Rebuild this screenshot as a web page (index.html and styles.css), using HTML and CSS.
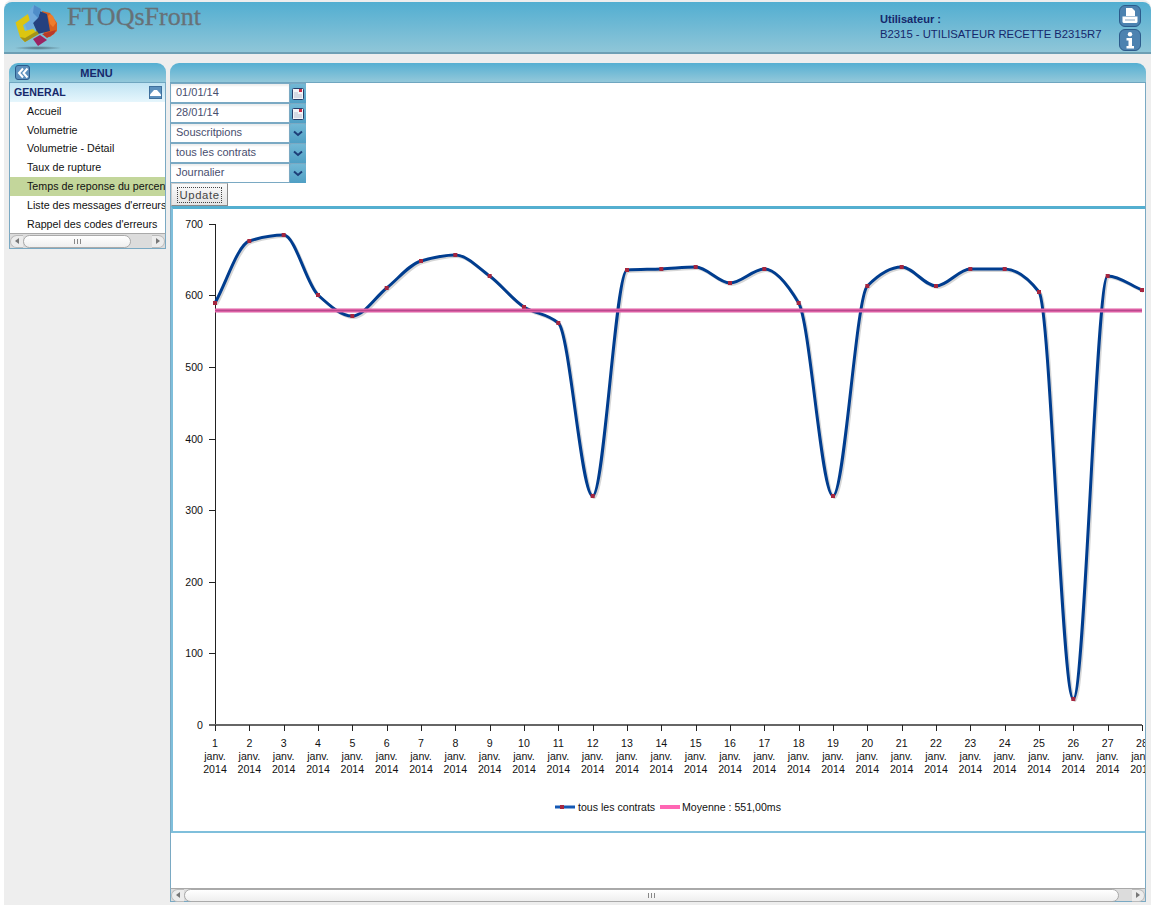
FILE: index.html
```html
<!DOCTYPE html>
<html lang="fr">
<head>
<meta charset="utf-8">
<title>FTOQsFront</title>
<link rel="stylesheet" href="styles.css">
</head>
<body>
<div class="page">
  <header class="topbar">
    <svg class="logo" width="50" height="48" viewBox="14 2 50 48">
      <defs><radialGradient id="ls"><stop offset="0" stop-color="#3c5560" stop-opacity=".75"/><stop offset="1" stop-color="#3c5560" stop-opacity="0"/></radialGradient></defs>
      <ellipse cx="38" cy="47" rx="24" ry="2" fill="url(#ls)"/>
      <polygon points="33,38 40,34 47,39 38,45" fill="#9b2463"/>
      <polygon points="42,10 50,12 57,22 57,30 50,36 44,34" fill="#d9601f"/>
      <polygon points="50,13 53,15 56,22 53,26 50,23 48,15" fill="#ef7d2c"/>
      <polygon points="42,33 56,29 54,33 47,37" fill="#b83a2a"/>
      <polygon points="37,9 47,13 50,30 38,33 33,22" fill="#25417f"/>
      <polygon points="15.500,21.500 28,13 30,20 23,24 25,30 33,28 38,33 25,41 20,36" fill="#dcc511"/>
      <polygon points="20,36 25,41 39,33 37,30 25,37" fill="#a3931a"/>
      <polygon points="28,11 34,4 41,8 38,17 33,22 34,27 27,29 25,23 30,19" fill="#6ea9dc"/>
      <polygon points="34,4 41,8 38,17 33,12" fill="#4f8dc9"/>
    </svg>
    <div class="brand">FTOQsFront</div>
    <div class="user">
      <div class="user-label">Utilisateur :</div>
      <div>B2315 - UTILISATEUR RECETTE B2315R7</div>
    </div>
    <div class="tools">
      <span class="tool">
        <svg width="18" height="18" viewBox="0 0 18 18"><path d="M5 1h6l3 3v5H5z" fill="#fff"/><path d="M1.500 9.500h15v5a1.500 1.500 0 0 1-1.500 1.500H3a1.500 1.500 0 0 1-1.500-1.500z" fill="#fff"/><rect x="4" y="12.500" width="10" height="1" fill="#8fa9c4"/></svg>
      </span>
      <span class="tool">
        <svg width="18" height="18" viewBox="0 0 18 18"><circle cx="9" cy="3.200" r="2.200" fill="#fff"/><path d="M5.500 7h5.500v8h2v2.500H5.500V15h2V9.500h-2z" fill="#fff"/></svg>
      </span>
    </div>
  </header>

  <main class="workspace">
    <aside class="sidebar">
      <div class="panel-head menu-head">
        <span class="collapse"><svg width="12" height="12" viewBox="0 0 12 12"><path d="M6 1.500 2 6l4 4.500M10.500 1.500 6.500 6l4 4.500" fill="none" stroke="#fff" stroke-width="2"/></svg></span>
        <span class="menu-title">MENU</span>
      </div>
      <div class="group-head">
        <span>GENERAL</span>
        <span class="group-toggle"><svg width="11" height="7" viewBox="0 0 11 7"><path d="M0 7V5.500L4 1h3l4 4.500V7z" fill="#fff"/></svg></span>
      </div>
      <nav class="menu">
        <a class="menu-item">Accueil</a>
        <a class="menu-item">Volumetrie</a>
        <a class="menu-item">Volumetrie - Détail</a>
        <a class="menu-item">Taux de rupture</a>
        <a class="menu-item is-active">Temps de reponse du percentile</a>
        <a class="menu-item">Liste des messages d'erreurs</a>
        <a class="menu-item">Rappel des codes d'erreurs</a>
      </nav>
      <div class="hscroll side-scroll">
        <span class="arrow left"></span>
        <span class="thumb"><span class="grip"></span></span>
        <span class="arrow right"></span>
      </div>
    </aside>

    <section class="content">
      <div class="panel-head"></div>
      <div class="content-body">
        <form class="filters">
          <div class="field"><span class="value">01/01/14</span><span class="btn"><svg width="12" height="12" viewBox="0 0 12 12"><rect x=".5" y=".5" width="11" height="11" rx="1" fill="#f2f4f8" stroke="#27406b"/><rect x="7" y="1" width="3" height="3" fill="#c8324a"/><path d="M2 5h4M2 7h8M2 9h8" stroke="#b6c0d0"/></svg></span></div>
          <div class="field"><span class="value">28/01/14</span><span class="btn"><svg width="12" height="12" viewBox="0 0 12 12"><rect x=".5" y=".5" width="11" height="11" rx="1" fill="#f2f4f8" stroke="#27406b"/><rect x="7" y="1" width="3" height="3" fill="#c8324a"/><path d="M2 5h4M2 7h8M2 9h8" stroke="#b6c0d0"/></svg></span></div>
          <div class="field"><span class="value">Souscritpions</span><span class="btn"><svg width="10" height="7" viewBox="0 0 10 7"><path d="M1 1.500 5 5l4-3.500" fill="none" stroke="#1d3f78" stroke-width="2"/></svg></span></div>
          <div class="field"><span class="value">tous les contrats</span><span class="btn"><svg width="10" height="7" viewBox="0 0 10 7"><path d="M1 1.500 5 5l4-3.500" fill="none" stroke="#1d3f78" stroke-width="2"/></svg></span></div>
          <div class="field"><span class="value">Journalier</span><span class="btn"><svg width="10" height="7" viewBox="0 0 10 7"><path d="M1 1.500 5 5l4-3.500" fill="none" stroke="#1d3f78" stroke-width="2"/></svg></span></div>
          <button class="update" type="button"><span>Update</span></button>
        </form>
        <div class="chart-box"><svg id="chart" class="chart" width="972" height="622" viewBox="173 209 972 622"></svg></div>
      </div>
      <div class="hscroll main-scroll">
        <span class="arrow left"></span>
        <span class="thumb"><span class="grip"></span></span>
        <span class="arrow right"></span>
      </div>
    </section>
  </main>
</div>
<script src="chart.js"></script>
</body>
</html>
```
FILE: styles.css
```css
* { box-sizing: border-box; }
html, body { margin: 0; height: 100%; background: #fff; }
body { font-family: "Liberation Sans", Arial, sans-serif; font-size: 10.700px; overflow: hidden; }
.page { margin: 0 5px 0 4px; height: 905px; background: #eee; display: flex; flex-direction: column; padding-top: 2px; border-radius: 8px 8px 0 0; }

.topbar { height: 52px; flex: none; display: flex; align-items: flex-start; background: linear-gradient(#52aed1, #8fc6d8); border-bottom: 2px solid #6d9fb4; border-radius: 8px 8px 0 0; }
.logo { flex: none; margin: 1px 0 0 10px; }
.brand { font-family: "Liberation Serif", serif; font-size: 26px; line-height: 30px; color: #677177; -webkit-text-stroke: .3px #677177; margin-left: 3px; }
.user { margin-left: auto; margin-top: 10px; font-size: 11.300px; line-height: 14px; color: #16286b; width: 239px; }
.user-label { font-weight: bold; line-height: 15px; font-size: 11.100px; }
.tools { flex: none; width: 32px; padding-top: 3px; display: flex; flex-direction: column; gap: 2px; }
.tool { width: 22px; height: 22px; display: flex; align-items: center; justify-content: center; background: #4c82b0; border: 1px solid #2c5b8c; border-radius: 6px; }

.workspace { flex: 1; display: flex; align-items: flex-start; padding: 9px 5px 3px 5px; gap: 4px; min-height: 0; }
.panel-head { height: 20px; background: linear-gradient(#55afd2, #93c8da); border-bottom: 1px solid #6fa6c0; border-radius: 9px 9px 0 0; }

.sidebar { width: 157px; flex: none; }
.menu-head { display: flex; align-items: center; padding-left: 6px; }
.collapse { width: 15px; height: 15px; display: flex; align-items: center; justify-content: center; background: #5c90bd; border: 1px solid #2c5b8c; border-radius: 3px; }
.menu-title { flex: 1; text-align: center; font-weight: bold; font-size: 11px; color: #16286b; padding-right: 3px; }
.group-head { height: 18.800px; display: flex; align-items: center; justify-content: space-between; padding: 0 3px 0 4px; font-weight: bold; font-size: 10.600px; color: #16286b; background: linear-gradient(#bfe3f3, #e6f6fc); border-left: 1px solid #7aa9c3; border-right: 1px solid #7aa9c3; }
.group-toggle { width: 13px; height: 13px; display: flex; align-items: center; justify-content: center; background: #5c90bd; border: 1px solid #3e6f9c; }
.menu { background: #fff; border-left: 1px solid #7aa9c3; border-right: 1px solid #7aa9c3; }
.menu-item { display: block; height: 18.800px; line-height: 18.800px; padding-left: 17px; color: #111; white-space: nowrap; overflow: hidden; }
.is-active { background: #c3d69b; }

.hscroll { display: flex; align-items: center; background: #dcdcdc; border: 1px solid #7aa9c3; border-top: 1px solid #a9a9a9; }
.arrow { flex: none; width: 13px; height: 13px; display: flex; align-items: center; justify-content: center; background: #ececec; border: 1px solid #bbb; }
.arrow.left { border-radius: 7px 0 0 7px; border-right: 0; }
.arrow.right { border-radius: 0 7px 7px 0; border-left: 0; }
.arrow::before { content: ""; border-style: solid; border-width: 3px 0 3px 4px; border-color: transparent transparent transparent #777; }
.arrow.left::before { border-width: 3px 4px 3px 0; border-color: transparent #777 transparent transparent; }
.thumb { height: 13px; display: flex; align-items: center; justify-content: center; background: linear-gradient(#fff, #efefef); border: 1px solid #aaa; border-radius: 7px; }
.grip { width: 7px; height: 5px; background: repeating-linear-gradient(90deg, #888 0 1px, transparent 1px 3px); }
.side-scroll { height: 16px; }
.side-scroll .thumb { width: 108px; }
.side-scroll .arrow.right { margin-left: auto; }
.main-scroll { flex: none; height: 14px; }
.main-scroll .thumb { width: 935px; }
.main-scroll .arrow.right { margin-left: auto; }

.content { width: 976px; flex: none; height: 839px; display: flex; flex-direction: column; }
.content-body { flex: 1; background: #fff; border-left: 1px solid #7aa9c3; border-right: 1px solid #7aa9c3; min-height: 0; }
.filters { display: block; }
.field { width: 135px; height: 20px; display: flex; background: #7aa9c3; padding-top: 1px; }
.value { width: 118px; height: 18px; line-height: 17px; padding-left: 5px; font-size: 11px; background: #fff; color: #484e6e; box-shadow: inset 0 2px 2px #eee; }
.btn { width: 16px; margin-left: 1px; height: 19px; display: flex; align-items: center; justify-content: center; background: linear-gradient(#72b8d5, #4f9fc4); border-radius: 2px 2px 0 0; }
.update { display: block; width: 57px; height: 23px; padding: 0; font: 11.300px "Liberation Sans", Arial, sans-serif; letter-spacing: .6px; color: #444; background: linear-gradient(#fafafa, #e4e4e4); border: 1px solid #ccc; border-right-color: #888; border-bottom-color: #888; }
.update span { border: 1px dotted #444; padding: 1px 1px; }
.chart-box { height: 627px; background: #fff; border-top: 3px solid #54afd0; border-left: 2px solid #7fbfdb; border-bottom: 2px solid #7fbfdb; overflow: hidden; }
.chart { display: block; }
.chart text { font-family: "Liberation Sans", Arial, sans-serif; font-size: 10.600px; fill: #111; }
.axis-line { stroke: #222; stroke-width: 1; fill: none; }
.axis-base { stroke: #666; stroke-width: 2; }
.series-shadow { fill: none; stroke: #bbb; stroke-width: 3; opacity: .6; }
.series { fill: none; stroke: #003d8f; stroke-width: 3; }
.point { fill: #a5263f; }
.avg-line { stroke: #dd5fa4; stroke-width: 4; }
.avg-core { stroke: #b84a8e; stroke-width: 1; }
.legend-line { stroke: #1458b4; stroke-width: 3; }
.legend-avg { stroke: #ff66b4; stroke-width: 4; }
```
FILE: chart.js
```js
(function () {
  var svg = document.getElementById('chart');
  var NS = 'http://www.w3.org/2000/svg';
  var ys = [303,241,235,295,316,288,261,255,276,307,323,496,270,269,267,283,269,303,496,286,267,286,269,269,292,699,276,290];
  var x0 = 215, step = 927 / 27, base = 725;

  function el(name, attrs, text) {
    var e = document.createElementNS(NS, name);
    for (var k in attrs) e.setAttribute(k, attrs[k]);
    if (text !== undefined) e.textContent = text;
    svg.appendChild(e);
    return e;
  }
  function px(i) { return x0 + i * step; }

  // Y axis
  el('line', { class: 'axis-line', x1: 215.5, y1: 224, x2: 215.5, y2: base });
  for (var v = 0; v <= 7; v++) {
    var y = Math.round(725 - v * 71.6) + 0.5;
    el('line', { class: 'axis-line', x1: 209, y1: y, x2: 215, y2: y });
    el('text', { x: 203, y: y + 3.5, 'text-anchor': 'end' }, String(v * 100));
  }

  // X axis
  el('line', { class: 'axis-base', x1: 209, y1: base, x2: 1142, y2: base });
  ys.forEach(function (_, i) {
    var x = Math.round(px(i)) + 0.5;
    el('line', { class: 'axis-line', x1: x, y1: base, x2: x, y2: base + 6 });
    el('text', { x: px(i), y: 747, 'text-anchor': 'middle' }, String(i + 1));
    el('text', { x: px(i), y: 760, 'text-anchor': 'middle' }, 'janv.');
    el('text', { x: px(i), y: 773, 'text-anchor': 'middle' }, '2014');
  });

  // Monotone cubic curve through the points
  var slopes = [];
  for (var i = 0; i < ys.length - 1; i++) slopes.push((ys[i + 1] - ys[i]) / step);
  var t = ys.map(function (_, i) {
    if (i === 0) return slopes[0];
    if (i === ys.length - 1) return slopes[i - 1];
    var a = slopes[i - 1], b = slopes[i];
    if (a * b <= 0) return 0;
    return 2 * a * b / (a + b);
  });
  var d = 'M' + px(0) + ' ' + ys[0];
  for (var j = 0; j < ys.length - 1; j++) {
    var h = step / 3;
    d += 'C' + (px(j) + h) + ' ' + (ys[j] + t[j] * h) + ' ' + (px(j + 1) - h) + ' ' + (ys[j + 1] - t[j + 1] * h) + ' ' + px(j + 1) + ' ' + ys[j + 1];
  }
  el('path', { class: 'series-shadow', d: d, transform: 'translate(1.5 1.5)' });
  el('path', { class: 'series', d: d });
  ys.forEach(function (y, i) {
    el('rect', { class: 'point', x: px(i) - 2, y: y - 2, width: 4, height: 4 });
  });

  // Average line
  el('line', { class: 'avg-line', x1: 215, y1: 310.5, x2: 1142, y2: 310.5 });
  el('line', { class: 'avg-core', x1: 215, y1: 310.5, x2: 1142, y2: 310.5 });

  // Legend
  el('line', { class: 'legend-line', x1: 555, y1: 807, x2: 575, y2: 807 });
  el('rect', { class: 'point', x: 560, y: 805, width: 4, height: 4 });
  el('text', { x: 578, y: 811 }, 'tous les contrats');
  el('line', { class: 'legend-avg', x1: 660, y1: 807, x2: 680, y2: 807 });
  el('text', { x: 682, y: 811 }, 'Moyenne : 551,00ms');
})();
```
